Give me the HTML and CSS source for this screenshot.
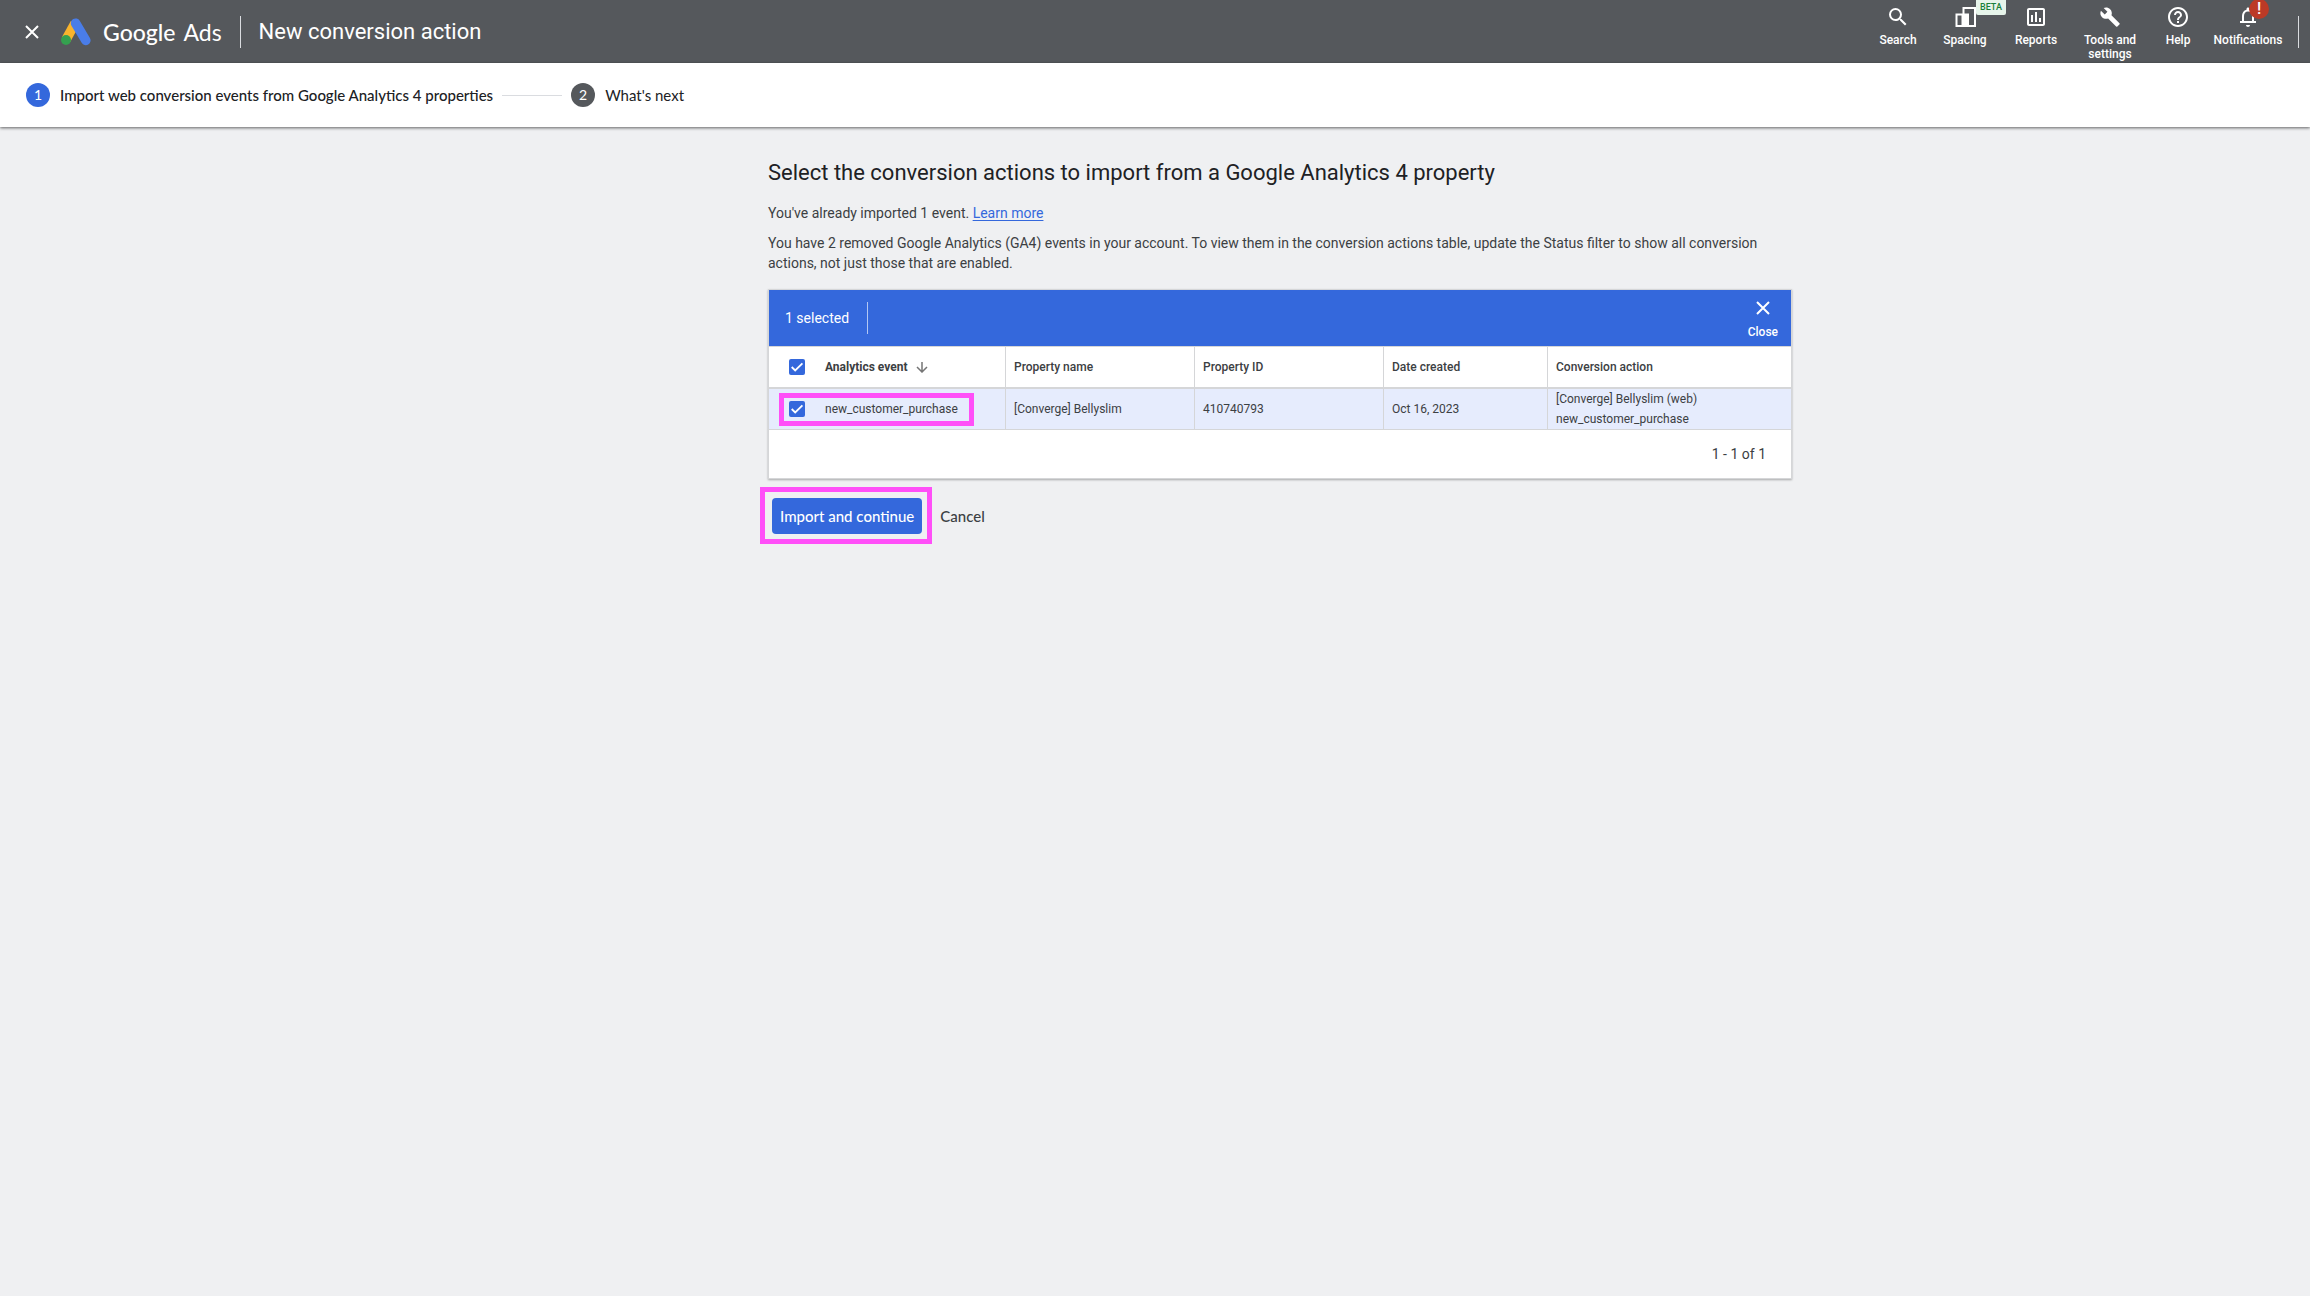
FILE: index.html
```html
<!DOCTYPE html>
<html lang="en">
<head>
    <meta charset="UTF-8">
    <meta name="viewport" content="width=device-width, initial-scale=1.0">
    <title>New conversion action - Google Ads</title>
    <link rel="stylesheet" href="styles.css">
</head>
<body>
    <header class="topbar">
        <button type="button" class="icon-button" aria-label="Close">
            <svg width="14" height="14" viewBox="0 0 14 14"><path d="M1 1l12 12M13 1L1 13" stroke="#fff" stroke-width="2"/></svg>
        </button>
        <a href="#" class="brand">
            <svg width="30" height="28" viewBox="0 0 30 28">
                <path d="M14 5.2L5 21.6" stroke="#f9b42d" stroke-width="9.6"/>
                <path d="M14.6 5.2L24.8 22.4" stroke="#4a7de8" stroke-width="9.6" stroke-linecap="round"/>
                <circle cx="5" cy="22" r="5" fill="#34a04f"/>
            </svg>
            <span class="brand-google">Google</span>
            <span class="brand-ads">Ads</span>
        </a>
        <span class="topbar-line"></span>
        <div class="topbar-title">New conversion action</div>

        <nav class="tools">
            <button type="button" class="tool">
                <svg width="24" height="24" viewBox="0 0 24 24"><path d="M15.5 14h-.79l-.28-.27A6.471 6.471 0 0 0 16 9.5 6.5 6.5 0 1 0 9.5 16c1.61 0 3.09-.59 4.23-1.57l.27.28v.79l5 4.99L20.49 19l-4.99-5zm-6 0C7.01 14 5 11.99 5 9.5S7.01 5 9.5 5 14 7.01 14 9.5 11.99 14 9.5 14z"/></svg>
                Search
            </button>
            <button type="button" class="tool">
                <svg width="24" height="24" viewBox="0 0 24 24"><path d="M9.5 2H23v20H16v-2h5V4h-9.5v4.5h-2zM2.5 8.5h13.5v13.5h-13.5zM4.5 10.5v9.5h4v-9.5z" fill-rule="evenodd"/></svg>
                Spacing
                <span class="beta">BETA</span>
            </button>
            <button type="button" class="tool">
                <svg width="24" height="24" viewBox="0 0 24 24"><path d="M9 17H7v-7h2v7zm4 0h-2V7h2v10zm4 0h-2v-4h2v4zm2 2H5V5h14v14zm0-16H5c-1.1 0-2 .9-2 2v14c0 1.1.9 2 2 2h14c1.1 0 2-.9 2-2V5c0-1.1-.9-2-2-2z"/></svg>
                Reports
            </button>
            <button type="button" class="tool">
                <svg width="24" height="24" viewBox="0 0 24 24"><path d="M22.7 19l-9.1-9.1c.9-2.3.4-5-1.5-6.900-2-2-5-2.400-7.400-1.300L9 6 6 9 1.600 4.700C.4 7.100.9 10.100 2.900 12.100c1.900 1.900 4.600 2.400 6.900 1.500l9.100 9.100c.4.4 1 .4 1.400 0l2.300-2.300c.5-.4.5-1.100.1-1.400z" transform="translate(1.5 1.5) scale(.88)"/></svg>
                Tools and settings
            </button>
            <button type="button" class="tool">
                <svg width="24" height="24" viewBox="0 0 24 24"><path d="M11 18h2v-2h-2v2zm1-16C6.48 2 2 6.48 2 12s4.48 10 10 10 10-4.48 10-10S17.52 2 12 2zm0 18c-4.41 0-8-3.59-8-8s3.59-8 8-8 8 3.59 8 8-3.59 8-8 8zm0-14c-2.21 0-4 1.79-4 4h2c0-1.1.9-2 2-2s2 .9 2 2c0 2-3 1.75-3 5h2c0-2.25 3-2.5 3-5 0-2.21-1.79-4-4-4z"/></svg>
                Help
            </button>
            <button type="button" class="tool">
                <svg width="24" height="24" viewBox="0 0 24 24"><path d="M12 22c1.1 0 2-.9 2-2h-4c0 1.1.9 2 2 2zm6-6v-5c0-3.07-1.63-5.64-4.5-6.32V4c0-.83-.67-1.5-1.5-1.5s-1.5.67-1.5 1.5v.68C7.64 5.36 6 7.92 6 11v5H4v2h16v-2h-2zm-2 0H8v-5c0-2.48 1.51-4.5 4-4.5s4 2.02 4 4.5v5z"/></svg>
                Notifications
                <span class="alert">!</span>
            </button>
        </nav>
        <span class="topbar-line"></span>
    </header>

    <ol class="steps">
        <li class="step active"><span class="step-number">1</span>Import web conversion events from Google Analytics 4 properties</li>
        <li class="step"><span class="step-number">2</span>What's next</li>
    </ol>

    <main class="page">
        <div class="content">
            <h1>Select the conversion actions to import from a Google Analytics 4 property</h1>
            <p>You've already imported 1 event. <a href="#">Learn more</a></p>
            <p>You have 2 removed Google Analytics (GA4) events in your account. To view them in the conversion actions table, update the Status filter to show all conversion actions, not just those that are enabled.</p>

            <section class="card">
                <div class="selection-bar">
                    <span class="selection-count">1 selected</span>
                    <button type="button" class="close-selection">
                        <svg width="14" height="14" viewBox="0 0 14 14"><path d="M1 1l12 12M13 1L1 13" stroke="#fff" stroke-width="2"/></svg>
                        Close
                    </button>
                </div>
                <table class="events">
                    <colgroup>
                        <col class="col-event">
                        <col class="col-property">
                        <col class="col-property">
                        <col class="col-date">
                        <col>
                    </colgroup>
                    <thead>
                        <tr>
                            <th class="sorted">
                                <label class="pick">
                                    <input type="checkbox" checked>
                                    Analytics event
                                    <svg width="12" height="12" viewBox="0 0 12 12"><path d="M6 1v10M1 6l5 5 5-5" fill="none" stroke="#757575" stroke-width="1.5"/></svg>
                                </label>
                            </th>
                            <th>Property name</th>
                            <th>Property ID</th>
                            <th>Date created</th>
                            <th>Conversion action</th>
                        </tr>
                    </thead>
                    <tbody>
                        <tr>
                            <td><label class="pick marked"><input type="checkbox" checked>new_customer_purchase</label></td>
                            <td>[Converge] Bellyslim</td>
                            <td>410740793</td>
                            <td>Oct 16, 2023</td>
                            <td>[Converge] Bellyslim (web)<br>new_customer_purchase</td>
                        </tr>
                    </tbody>
                </table>
                <div class="pager">1 - 1 of 1</div>
            </section>

            <div class="actions">
                <div class="marked">
                    <button type="button" class="primary">Import and continue</button>
                </div>
                <button type="button" class="cancel">Cancel</button>
            </div>
        </div>
    </main>
</body>
</html>
```
FILE: styles.css
```css
* {
    box-sizing: border-box;
}

body {
    margin: 0;
    min-height: 100vh;
    background-color: #eff0f2;
    color: #3c4043;
    font-family: Roboto, sans-serif;
    font-size: 14px;
    line-height: 20px;
}

button {
    padding: 0;
    border: none;
    background: none;
    font-family: inherit;
    cursor: pointer;
}

svg {
    display: block;
}

/* Top bar */
.topbar {
    display: flex;
    align-items: center;
    height: 63px;
    padding: 0 11px 0 25px;
    background-color: #55585c;
    color: white;
}

.brand {
    display: flex;
    align-items: center;
    margin-left: 22px;
    color: white;
    font-family: Lato, sans-serif;
    font-size: 23px;
    line-height: 32px;
    text-decoration: none;
}

.brand-google {
    margin-left: 12px;
    font-weight: 500;
}

.brand-ads {
    margin-left: 8px;
}

.topbar-line {
    width: 1px;
    height: 32px;
    background-color: #dadce0;
}

.brand + .topbar-line {
    margin: 0 18px;
}

.topbar-title {
    font-size: 22px;
    line-height: 30px;
}

.tools {
    display: grid;
    grid-template-columns: 64px 70px 72px 76px 60px 80px;
    align-self: flex-start;
    margin-left: auto;
    margin-right: 10px;
}

.tool {
    display: flex;
    flex-direction: column;
    align-items: center;
    gap: 4px;
    position: relative;
    padding: 5px 8px 0;
    color: white;
    font-size: 12px;
    font-weight: 500;
    line-height: 14px;
}

.tool:last-child {
    padding: 5px 0 0;
}

.tool svg {
    fill: white;
}

.beta {
    position: absolute;
    top: 0;
    left: 46px;
    padding: 0 4px;
    border-radius: 0 0 2px 2px;
    background-color: #e6f4ea;
    color: #188038;
    font-size: 9px;
    line-height: 15px;
}

.alert {
    position: absolute;
    top: -1px;
    left: 41px;
    width: 20px;
    border-radius: 50%;
    background-color: #bc3a26;
    font-size: 16px;
    line-height: 20px;
}

/* Steps */
.steps {
    display: flex;
    align-items: center;
    position: relative;
    height: 64px;
    margin: 0;
    padding: 0 26px;
    background-color: white;
    box-shadow: 0 1px 3px rgba(0, 0, 0, 0.6);
    list-style: none;
}

.step {
    display: flex;
    align-items: center;
    color: #202124;
    font-family: Lato, sans-serif;
    font-size: 15px;
}

.step.active {
    font-weight: 500;
}

.step.active::after {
    content: "";
    width: 60px;
    height: 1px;
    margin: 0 9px;
    background-color: #dadce0;
}

.step-number {
    width: 24px;
    margin-right: 10px;
    border-radius: 50%;
    background-color: #55585c;
    color: white;
    font-size: 14px;
    font-weight: 400;
    line-height: 24px;
    text-align: center;
}

.active .step-number {
    background-color: #3468dc;
}

/* Page */
.page {
    display: grid;
    grid-template-columns: minmax(16px, 768fr) minmax(0, 1024px) minmax(16px, 518fr);
    padding: 32px 0;
}

.content {
    grid-column: 2;
}

h1 {
    margin: 0 0 16px;
    color: #202124;
    font-size: 22px;
    font-weight: 400;
    line-height: 28px;
}

p {
    margin: 0 0 10px;
}

p a {
    color: #3468dc;
    text-underline-offset: 2px;
}

.card {
    margin-top: 16px;
    border: 1px solid #d5d6d8;
    background-color: white;
    box-shadow: 0 1px 2px rgba(0, 0, 0, 0.3);
}

.selection-bar {
    display: flex;
    align-items: center;
    justify-content: space-between;
    height: 56px;
    padding: 0 13px 0 16px;
    background-color: #3468dc;
    color: white;
}

.selection-count {
    padding-right: 18px;
    border-right: 1px solid #b3c7f3;
    line-height: 32px;
}

.close-selection {
    display: flex;
    flex-direction: column;
    align-items: center;
    gap: 10px;
    padding-top: 4px;
    color: white;
    font-size: 12px;
    font-weight: 500;
    line-height: 14px;
}

/* Table */
.events {
    width: 100%;
    border-spacing: 0;
    border-top: 1px solid #d5d6d8;
    table-layout: fixed;
    font-size: 12px;
    text-align: left;
}

.col-event {
    width: 237px;
}

.col-property {
    width: 189px;
}

.col-date {
    width: 164px;
}

th, td {
    height: 42px;
    padding: 0 8px;
    border-right: 1px solid #d5d6d8;
    border-bottom: 2px solid #d5d6d8;
}

th {
    font-weight: 500;
}

th.sorted {
    font-weight: 700;
}

td {
    height: 41px;
    border-bottom-width: 1px;
    background-color: #e6ecfd;
}

th:first-child, td:first-child {
    padding-left: 10px;
}

th:last-child, td:last-child {
    border-right: none;
}

.pick {
    display: flex;
    align-items: center;
    width: 195px;
    height: 33px;
    padding-left: 10px;
}

.pick input {
    width: 16px;
    height: 16px;
    margin: 0 20px 0 0;
    border-radius: 2px;
    appearance: none;
    background: #3468dc url("data:image/svg+xml,%3Csvg xmlns='http://www.w3.org/2000/svg' viewBox='0 0 16 16'%3E%3Cpath d='M2.7 8l3.5 3.5 7.2-7.2' fill='none' stroke='white' stroke-width='1.8'/%3E%3C/svg%3E");
}

.pick svg {
    margin-left: 8px;
}

.pager {
    padding: 14px 25px;
    text-align: right;
}

/* Pink frames around the things to click */
.marked {
    position: relative;
}

.marked::after {
    content: "";
    position: absolute;
    inset: 0;
    border: 5px solid #ff4ff8;
    pointer-events: none;
}

.actions .marked::after {
    inset: -11px -10px -10px -12px;
}

.actions {
    display: flex;
    gap: 10px;
    margin-top: 19px;
    padding-left: 4px;
}

.actions button {
    height: 36px;
    padding: 0 8px;
    border-radius: 4px;
    font-family: Lato, sans-serif;
    font-size: 15px;
    font-weight: 500;
}

.primary {
    background-color: #3468dc;
    color: white;
}

.cancel {
    color: #3c4043;
}
```
